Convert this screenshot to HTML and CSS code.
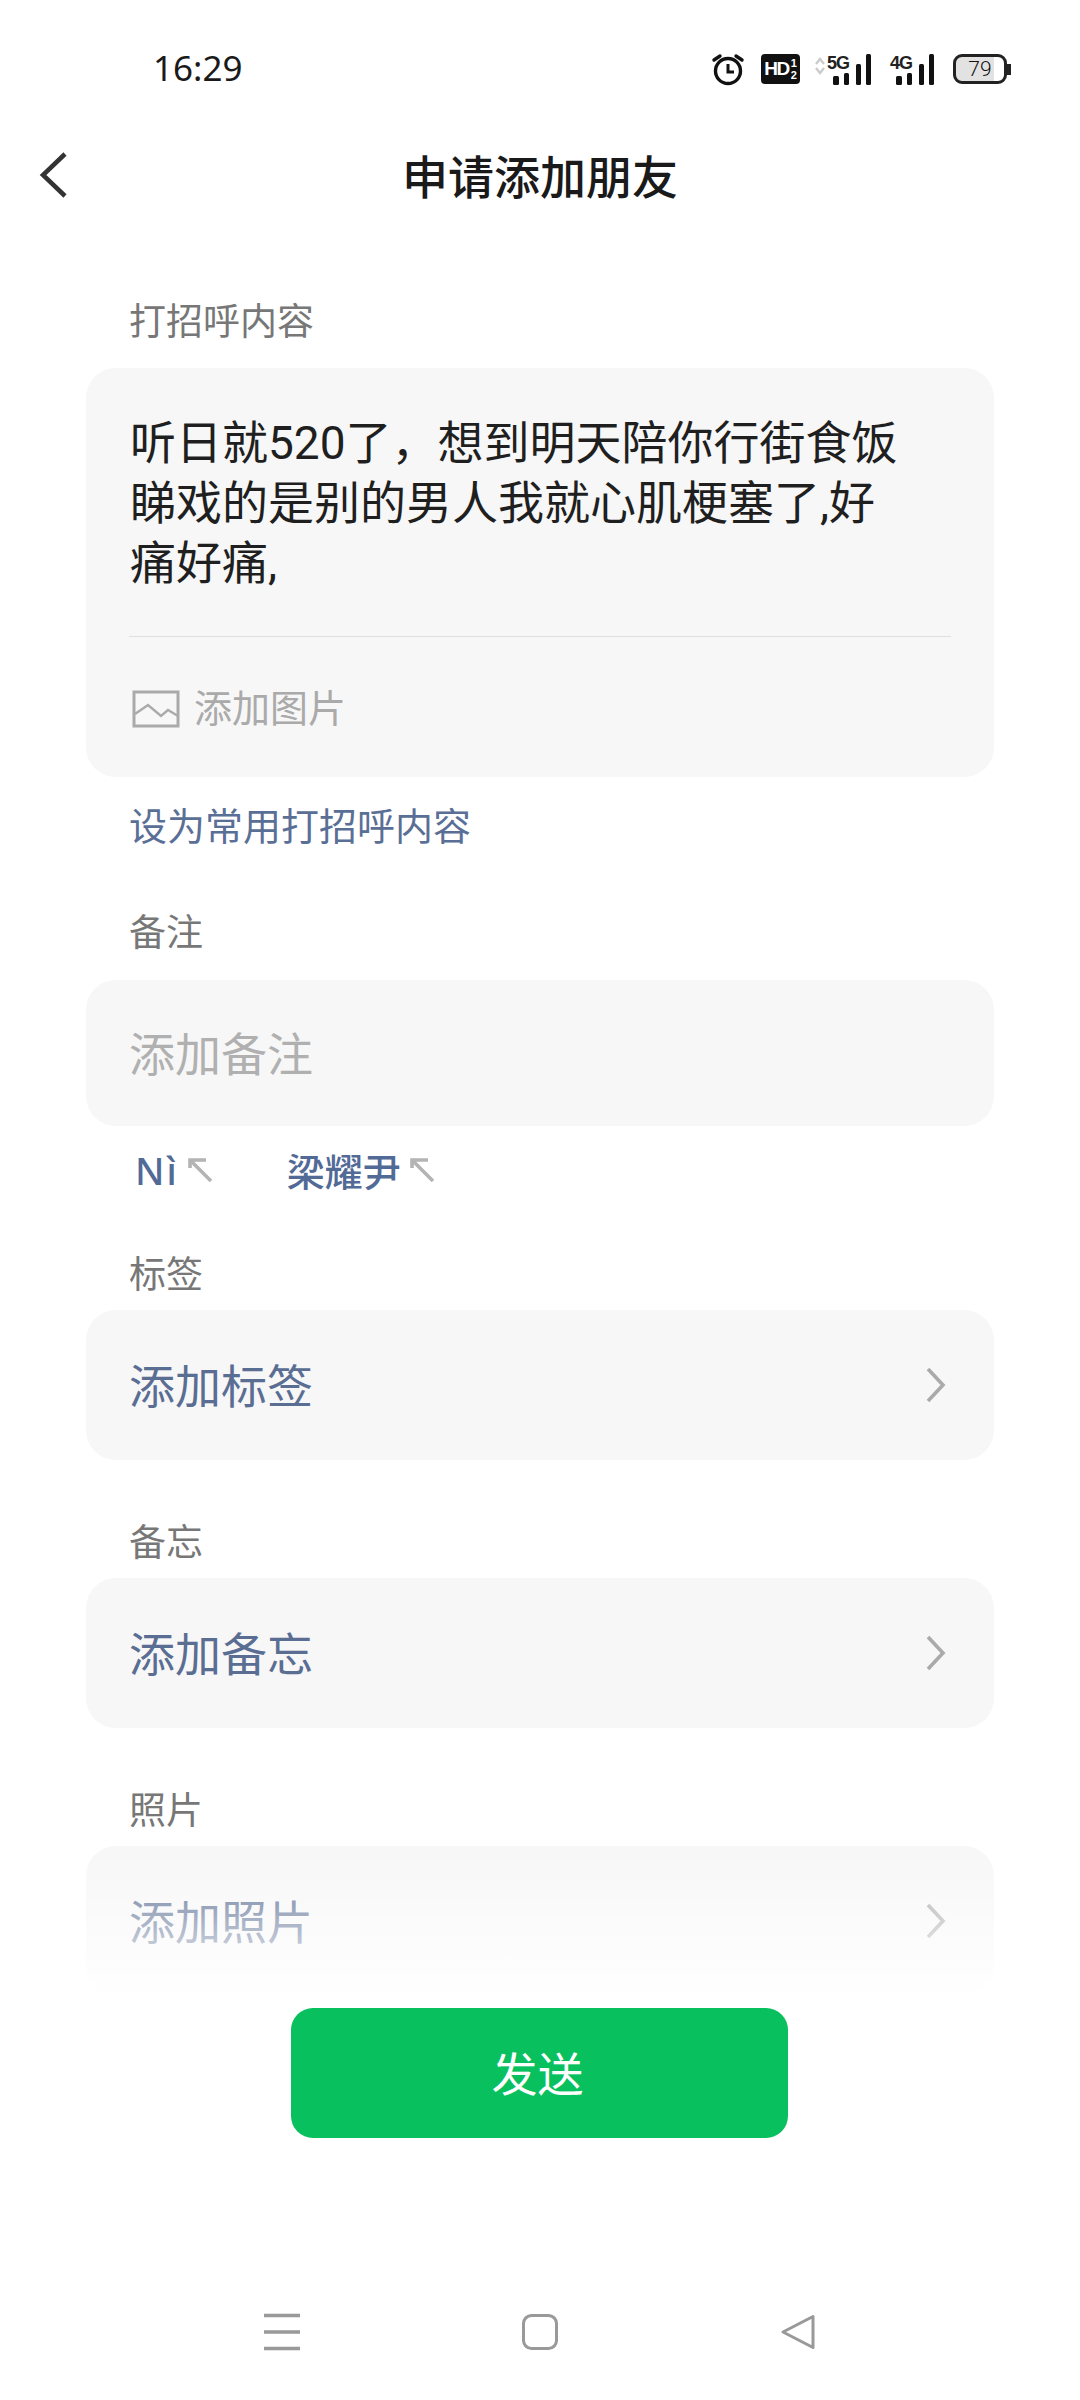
FILE: index.html
```html
<!DOCTYPE html>
<html lang="zh-CN">
<head>
    <meta charset="UTF-8">
    <meta name="viewport" content="width=device-width, initial-scale=1.0">
    <title>申请添加朋友</title>
    <link rel="stylesheet" href="styles.css">
</head>
<body>
    <!-- Status bar -->
    <div class="status-bar">
        <span class="time">16:29</span>
        <div class="status-icons">
            <svg class="icon-alarm" width="34" height="34" viewBox="0 0 34 34">
                <circle cx="17" cy="19" r="12.5" fill="none" stroke="#111" stroke-width="3.4"/>
                <path d="M17 12v8h6" fill="none" stroke="#111" stroke-width="3"/>
                <path d="M3 8l6-4M31 8l-6-4" fill="none" stroke="#111" stroke-width="3.4" stroke-linecap="round"/>
            </svg>
            <div class="hd-badge"><span>HD</span><span class="hd-frac">1<br>2</span></div>
            <div class="signal">
                <svg class="updown" width="10" height="18" viewBox="0 0 10 18">
                    <path d="M1 7l4-5 4 5M1 11l4 5 4-5" fill="none" stroke="#ccc" stroke-width="2.4"/>
                </svg>
                <span class="net">5G</span>
                <svg class="bars" width="38" height="31" viewBox="0 0 38 31">
                    <rect x="0" y="22" width="6" height="9" rx="1.500"/>
                    <rect x="11" y="19" width="5" height="12" rx="1.500"/>
                    <rect x="23" y="10" width="5" height="21" rx="1.500"/>
                    <rect x="33" y="0" width="5" height="31" rx="1.500"/>
                </svg>
            </div>
            <div class="signal signal-4g">
                <span class="net">4G</span>
                <svg class="bars" width="38" height="31" viewBox="0 0 38 31">
                    <rect x="0" y="22" width="6" height="9" rx="1.500"/>
                    <rect x="11" y="19" width="5" height="12" rx="1.500"/>
                    <rect x="23" y="10" width="5" height="21" rx="1.500"/>
                    <rect x="33" y="0" width="5" height="31" rx="1.500"/>
                </svg>
            </div>
            <div class="battery"><span class="battery-level">79</span></div>
            <div class="battery-nub"></div>
        </div>
    </div>

    <!-- Title bar -->
    <div class="title-bar">
        <svg class="back" width="30" height="48" viewBox="0 0 30 48">
            <path d="M26 3L4 24l22 21" fill="none" stroke="#333" stroke-width="4.500"/>
        </svg>
        <h1>申请添加朋友</h1>
    </div>

    <div class="form-area">
        <div class="label">打招呼内容</div>
        <div class="card greeting-card">
            <p class="greeting">听日就520了，想到明天陪你行街食饭睇戏的是别的男人我就心肌梗塞了,好痛好痛,</p>
            <div class="divider"></div>
            <div class="add-image">
                <svg width="48" height="38" viewBox="0 0 48 38">
                    <rect x="2" y="2" width="44" height="34" fill="none" stroke="#aaa" stroke-width="3"/>
                    <path d="M3 24l13-9 13 11 7-6 10 6" fill="none" stroke="#aaa" stroke-width="2.400"/>
                </svg>
                <span>添加图片</span>
            </div>
        </div>
        <div class="link-row">设为常用打招呼内容</div>

        <div class="label label-note">备注</div>
        <div class="card note-card">添加备注</div>
        <div class="suggestions">
            <span class="suggestion suggestion-nick">Nì
                <svg width="24" height="24" viewBox="0 0 24 24"><path d="M2 10V2h16M2 2l21 21" fill="none" stroke="#b4b4b4" stroke-width="3.600"/></svg>
            </span>
            <span class="suggestion">梁耀尹
                <svg width="24" height="24" viewBox="0 0 24 24"><path d="M2 10V2h16M2 2l21 21" fill="none" stroke="#b4b4b4" stroke-width="3.600"/></svg>
            </span>
        </div>

        <div class="label label-tag">标签</div>
        <div class="card row-card">
            <span>添加标签</span>
            <svg width="22" height="38" viewBox="0 0 22 38"><path d="M3 3l15 16L3 35" fill="none" stroke="#aaa" stroke-width="3.600"/></svg>
        </div>

        <div class="label label-row">备忘</div>
        <div class="card row-card">
            <span>添加备忘</span>
            <svg width="22" height="38" viewBox="0 0 22 38"><path d="M3 3l15 16L3 35" fill="none" stroke="#aaa" stroke-width="3.600"/></svg>
        </div>

        <div class="label label-row">照片</div>
        <div class="card row-card">
            <span>添加照片</span>
            <svg width="22" height="38" viewBox="0 0 22 38"><path d="M3 3l15 16L3 35" fill="none" stroke="#aaa" stroke-width="3.600"/></svg>
        </div>

        <div class="fade"></div>
    </div>

    <div class="send-row">
        <button class="send">发送</button>
    </div>

    <!-- System navigation -->
    <div class="nav-bar">
        <svg width="36" height="38" viewBox="0 0 36 38">
            <path d="M0 2.500h36M0 19h36M0 35.500h36" fill="none" stroke="#999" stroke-width="3.600"/>
        </svg>
        <svg width="36" height="36" viewBox="0 0 36 36">
            <rect x="1.500" y="1.500" width="33" height="33" rx="8" fill="none" stroke="#999" stroke-width="3"/>
        </svg>
        <svg width="36" height="36" viewBox="0 0 36 36">
            <path d="M33 2.500L3 18l30 15.500z" fill="none" stroke="#999" stroke-width="3" stroke-linejoin="round"/>
        </svg>
    </div>
</body>
</html>
```

FILE: styles.css
```css
* {
    box-sizing: border-box;
}

body {
    margin: 0;
    width: 1080px;
    height: 2400px;
    overflow: hidden;
    display: flex;
    flex-direction: column;
    background-color: #ffffff;
    color: #1a1a1a;
    font-family: "Noto Sans CJK SC", "Noto Sans", sans-serif;
}

/* Status bar */
.status-bar {
    height: 136px;
    padding: 0 69px 0 153px;
    display: flex;
    justify-content: space-between;
    align-items: center;
}

.time {
    font-family: "Noto Sans", sans-serif;
    font-size: 35px;
    line-height: 44px;
    color: #1a1a1a;
}

.status-icons {
    display: flex;
    align-items: center;
    padding-top: 2px;
}

.icon-alarm {
    margin-right: 16px;
}

.hd-badge {
    width: 39px;
    height: 30px;
    overflow: hidden;
    background-color: #111;
    border-radius: 4px;
    color: #fff;
    font-family: "Liberation Sans", sans-serif;
    font-size: 19px;
    font-weight: 700;
    letter-spacing: -1.5px;
    display: flex;
    align-items: center;
    justify-content: center;
    margin-right: 15px;
}

.hd-frac {
    font-size: 11px;
    line-height: 12px;
    letter-spacing: 0;
    margin-left: 2px;
    text-align: center;
}

.signal {
    position: relative;
    display: flex;
    align-items: flex-end;
    height: 31px;
    width: 56px;
    justify-content: flex-end;
}

.signal-4g {
    margin-left: 19px;
    width: 44px;
}

.updown {
    position: absolute;
    left: 0;
    top: 3px;
}

.net {
    position: absolute;
    left: 12px;
    top: -2px;
    font-family: "Liberation Sans", sans-serif;
    font-size: 18px;
    line-height: 22px;
    font-weight: 700;
    letter-spacing: -1px;
    color: #222;
}

.signal-4g .net {
    left: 0;
}

.bars {
    fill: #111;
}

.battery {
    margin-left: 19px;
    width: 54px;
    height: 30px;
    border: 3px solid #222;
    border-radius: 9px;
    background: linear-gradient(to right, #e2e2e2 80%, #fff 80%);
    display: flex;
    align-items: center;
    justify-content: center;
}

.battery-level {
    font-family: Roboto, sans-serif;
    font-size: 21px;
    font-weight: 300;
    line-height: 22px;
    color: #111;
}

.battery-nub {
    width: 4px;
    height: 11px;
    background-color: #222;
}

/* Title bar */
.title-bar {
    position: relative;
    height: 82px;
    display: flex;
    align-items: center;
    justify-content: center;
}

.title-bar h1 {
    margin: 0 0 6px;
    font-size: 46px;
    font-weight: 500;
    line-height: 60px;
    color: #1a1a1a;
}

.back {
    position: absolute;
    left: 39px;
    top: 15px;
}

/* Form */
.form-area {
    position: relative;
    height: 1782px;
    overflow: hidden;
    padding: 80px 86px 0;
}

.label {
    font-size: 37px;
    line-height: 42px;
    padding: 0 0 6px 43px;
    color: #777777;
}

.card {
    margin-top: 22px;
    background-color: #f7f7f7;
    border-radius: 30px;
    padding: 0 43px;
}

.greeting-card {
    height: 409px;
    padding: 45px 43px 0;
}

.greeting {
    margin: 0;
    padding: 0 40px 0 1px;
    font-family: Roboto, "Noto Sans CJK SC", sans-serif;
    font-size: 46px;
    line-height: 60px;
    color: #1f1f1f;
}

.divider {
    height: 1px;
    margin-top: 43px;
    background-color: #e0e0e0;
}

.add-image {
    margin-top: 47px;
    padding-left: 3px;
    display: flex;
    align-items: center;
    gap: 14px;
    font-size: 38px;
    line-height: 44px;
    color: #aaaaaa;
}

.add-image span {
    padding-bottom: 6px;
}

.link-row {
    margin-top: 26px;
    padding: 0 0 6px 43px;
    font-size: 38px;
    line-height: 42px;
    color: #5a6f96;
}

.label-note {
    margin-top: 58px;
}

.note-card {
    height: 146px;
    margin-top: 23px;
    font-size: 46px;
    line-height: 142px;
    color: #b0b0b0;
}

.suggestions {
    margin-top: 20px;
    height: 48px;
    padding-left: 49px;
    display: flex;
    align-items: center;
    gap: 75px;
}

.suggestion {
    display: flex;
    align-items: center;
    gap: 9px;
    font-size: 38px;
    font-weight: 500;
    line-height: 48px;
    color: #526a96;
}

.suggestion-nick {
    font-family: "Noto Sans", sans-serif;
    letter-spacing: 2px;
}

.label-tag {
    margin-top: 57px;
}

.label-row {
    margin-top: 59px;
}

.row-card {
    height: 150px;
    margin-top: 11px;
    padding-right: 47px;
    display: flex;
    align-items: center;
    justify-content: space-between;
    font-size: 46px;
    color: #5a6e93;
}

.row-card span {
    padding-bottom: 4px;
}

/* Content fades out above the send button */
.fade {
    position: absolute;
    left: 0;
    right: 0;
    bottom: 0;
    height: 150px;
    background: linear-gradient(to bottom, rgba(255, 255, 255, 0), #ffffff);
}

/* Send button */
.send-row {
    margin-top: 8px;
    display: flex;
    justify-content: center;
    padding-right: 2px;
}

.send {
    width: 497px;
    height: 130px;
    padding: 0 3px 4px 0;
    border: none;
    border-radius: 22px;
    background-color: #09c05f;
    color: #ffffff;
    font-family: inherit;
    font-size: 46px;
}

/* System navigation */
.nav-bar {
    margin-top: auto;
    padding-bottom: 49px;
    display: flex;
    justify-content: center;
    gap: 222px;
    align-items: center;
}
```
